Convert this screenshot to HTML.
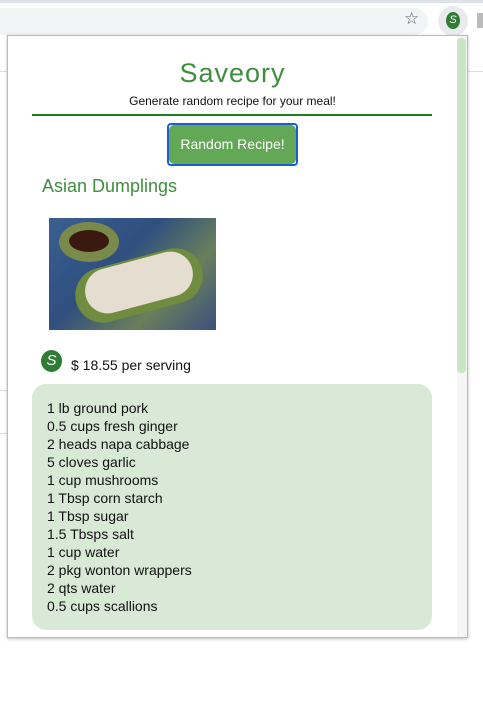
<!DOCTYPE html>
<html><head><style>
body{margin:0;width:483px;height:707px;background:#fff;position:relative;overflow:hidden;font-family:"Liberation Sans",sans-serif}
.abs{position:absolute}
</style></head><body>
<div class="abs" style="left:0;top:0;width:483px;height:3px;background:#dee1e6"></div>
<div class="abs" style="left:-20px;top:8px;width:448px;height:27px;background:#f1f3f4;border-radius:14px"></div>
<div class="abs" style="left:404px;top:9px;font-size:17px;color:#5f6368">☆</div>
<div class="abs" style="left:438px;top:6px;width:30px;height:30px;border-radius:50%;background:#e8eaed"></div>
<div class="abs" style="left:446px;top:12px;width:14px;height:17px;border-radius:50%;background:#2e7d32;color:#fff;font-size:11px;font-style:italic;text-align:center;line-height:17px">S</div>
<div class="abs" style="left:477px;top:13px;width:6px;height:15px;background:#bbb"></div>
<div class="abs" style="left:0;top:71px;width:483px;height:1px;background:#ddd"></div>
<div class="abs" style="left:0;top:390px;width:8px;height:1px;background:#ddd"></div>
<div class="abs" style="left:0;top:433px;width:8px;height:1px;background:#ddd"></div>

<div class="abs" style="left:7px;top:35px;width:459px;height:601px;background:#fff;border:1px solid #bbb;box-shadow:0 1px 3px rgba(0,0,0,.25)">
  <div class="abs" style="left:449px;top:0;width:10px;height:601px;background:#f5f5f5"></div>
  <div class="abs" style="left:449px;top:2px;width:9px;height:335px;background:#c8e6c3;border-radius:4px"></div>
  <div class="abs" style="left:0;top:22px;width:449px;text-align:center;font-size:27px;color:#3e8e3e;letter-spacing:1px">Saveory</div>
  <div class="abs" style="left:0;top:58px;width:449px;text-align:center;font-size:12px;color:#111">Generate random recipe for your meal!</div>
  <div class="abs" style="left:24px;top:78px;width:400px;height:2px;background:#1e7d1e"></div>
  <div class="abs" style="left:159px;top:87px;width:127px;height:39px;border:2px solid #1a5fd0;border-radius:4px;background:#fff"></div>
  <div class="abs" style="left:161px;top:89px;width:127px;height:39px;background:#62a857;border-radius:5px;color:#fff;font-size:14px;text-align:center;line-height:39px">Random Recipe!</div>
  <div class="abs" style="left:34px;top:140px;font-size:18px;color:#3e8e3e">Asian Dumplings</div>
  <div class="abs" style="left:41px;top:182px;width:167px;height:112px;background:linear-gradient(135deg,#3a5f8f,#2f4f7f 40%,#6a7f5a 70%,#3a5080);overflow:hidden">
    <div class="abs" style="left:10px;top:4px;width:60px;height:40px;border-radius:50%;background:#7a8a4a"></div>
    <div class="abs" style="left:20px;top:12px;width:40px;height:22px;border-radius:50%;background:#3a1a10"></div>
    <div class="abs" style="left:25px;top:40px;width:130px;height:55px;border-radius:30px;background:#6f8c3f;transform:rotate(-15deg)"></div>
    <div class="abs" style="left:35px;top:42px;width:110px;height:45px;border-radius:25px;background:#e5ddd0;transform:rotate(-15deg)"></div>
  </div>
  <div class="abs" style="left:33px;top:314px;width:21px;height:22px;border-radius:50%;background:#2e7d32;color:#fff;font-size:15px;font-style:italic;text-align:center;line-height:22px">S</div>
  <div class="abs" style="left:63px;top:321px;font-size:14px;color:#111">$ 18.55 per serving</div>
  <div class="abs" style="left:24px;top:348px;width:400px;height:246px;background:#d8ead6;border-radius:14px"></div>
  <div class="abs" style="left:39px;top:363px;font-size:14px;line-height:18px;color:#111">1 lb ground pork<br>0.5 cups fresh ginger<br>2 heads napa cabbage<br>5 cloves garlic<br>1 cup mushrooms<br>1 Tbsp corn starch<br>1 Tbsp sugar<br>1.5 Tbsps salt<br>1 cup water<br>2 pkg wonton wrappers<br>2 qts water<br>0.5 cups scallions</div>
</div>
</body></html>
